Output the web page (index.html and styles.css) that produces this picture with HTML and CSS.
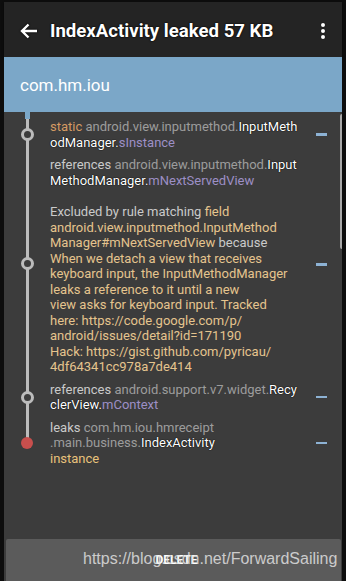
FILE: index.html
```html
<!DOCTYPE html>
<html lang="en">
<head>
    <meta charset="UTF-8">
    <meta name="viewport" content="width=device-width, initial-scale=1.0">
    <title>IndexActivity leaked 57 KB</title>
    <link rel="stylesheet" href="styles.css">
</head>
<body>
    <div class="phone">
        <div class="toolbar">
            <svg class="back" width="18" height="16" viewBox="0 0 18 16">
                <path d="M17 8H2.5M8.5 1.5L2 8l6.5 6.5" fill="none" stroke="#fff" stroke-width="2.4"/>
            </svg>
            <h1 class="title">IndexActivity leaked 57 KB</h1>
            <div class="menu">
                <span></span><span></span><span></span>
            </div>
        </div>

        <div class="app-header">com.hm.iou</div>

        <div class="trace">
            <div class="row">
                <div class="node"></div>
                <div class="text">
                    <span class="kw">static</span> <span class="pkg">android.view.inputmethod.</span><span class="cls">InputMeth<br>odManager.</span><span class="field">sInstance</span>
                </div>
                <div class="minus"></div>
            </div>

            <div class="row">
                <div></div>
                <div class="text">
                    <span class="ref">references</span> <span class="pkg">android.view.inputmethod.</span><span class="cls">Input<br>MethodManager.</span><span class="field">mNextServedView</span>
                </div>
                <div></div>
            </div>

            <div class="row row-long">
                <div class="node"></div>
                <div class="text">
                    <span class="ref">Excluded by rule matching</span> <span class="rule">field<br>android.view.inputmethod.InputMethod<br>Manager#mNextServedView</span> <span class="ref">because</span><br>
                    <span class="rule">When we detach a view that receives<br>keyboard input, the InputMethodManager<br>leaks a reference to it until a new<br>view asks for keyboard input. Tracked<br>here: https://code.google.com/p/<br>android/issues/detail?id=171190<br>Hack: https://gist.github.com/pyricau/<br>4df64341cc978a7de414</span>
                </div>
                <div class="minus"></div>
            </div>

            <div class="row">
                <div class="node"></div>
                <div class="text">
                    <span class="ref">references</span> <span class="pkg">android.support.v7.widget.</span><span class="cls">Recy<br>clerView.</span><span class="field">mContext</span>
                </div>
                <div class="minus"></div>
            </div>

            <div class="row">
                <div class="node leak"></div>
                <div class="text">
                    <span class="ref">leaks</span> <span class="pkg">com.hm.iou.hmreceipt<br>.main.business.</span><span class="cls">IndexActivity</span><br>
                    <span class="inst">instance</span>
                </div>
                <div class="minus"></div>
            </div>

            <div class="scroll-edge"></div>
        </div>

        <div class="delete-bar">
            <span class="delete">DELETE</span>
            <span class="watermark">https://blog.csdn.net/ForwardSailing</span>
        </div>
    </div>
</body>
</html>
```

FILE: styles.css
```css
body {
    margin: 0;
    background: #0d0d0d;
    font-family: Roboto, "Noto Sans", sans-serif;
    width: 346px;
    height: 581px;
    overflow: hidden;
}

.phone {
    margin: 2px 0 0 4px;
    width: 338px;
    height: 579px;
    display: flex;
    flex-direction: column;
    background: #3c3c3c;
}

.toolbar {
    height: 55px;
    flex-shrink: 0;
    background: #242424;
    display: flex;
    align-items: center;
    padding: 2px 0 0 16px;
    box-sizing: border-box;
    box-shadow: 0 1px 2px rgba(0, 0, 0, 0.6);
}

.back {
    flex-shrink: 0;
    filter: drop-shadow(0 0 1px #000);
}

.title {
    margin: 0 0 0 12px;
    flex: 1;
    color: #fff;
    font-size: 18.6px;
    font-weight: bold;
    text-shadow: 0 0 2px #000, 0 0 1px #000;
}

.menu {
    width: 30px;
    display: flex;
    flex-direction: column;
    align-items: center;
    gap: 2px;
    margin-right: 4px;
}

.menu span {
    width: 4px;
    height: 4px;
    border-radius: 50%;
    background: #fff;
    box-shadow: 0 0 1px #000;
}

.app-header {
    height: 55px;
    flex-shrink: 0;
    background: #7ba7c8;
    color: #fff;
    font-size: 17px;
    display: flex;
    align-items: center;
    padding-left: 16px;
    box-sizing: border-box;
}

.trace {
    flex: 1;
    position: relative;
    padding-top: 7px;
    background:
        linear-gradient(#7ba7c8, #7ba7c8) no-repeat 20.5px 0 / 5px 7px,
        linear-gradient(#bcbcbc, #bcbcbc) no-repeat 21.5px 0 / 3px 332px;
}

.row {
    display: grid;
    grid-template-columns: 46px 1fr 30px;
    align-items: center;
    margin-bottom: 7px;
}

.row:nth-child(2) {
    margin-bottom: 16px;
}

.text {
    font-size: 13px;
    line-height: 15.5px;
    white-space: nowrap;
}

.node {
    width: 7px;
    height: 7px;
    border: 3px solid #bcbcbc;
    border-radius: 50%;
    background: #3c3c3c;
    justify-self: center;
}

.node.leak {
    width: 12px;
    height: 12px;
    border: none;
    background: #c84f4d;
}

.minus {
    width: 11px;
    height: 2.5px;
    background: #8db2d4;
    margin-left: 4px;
}

.row-long {
    align-items: start;
}

.row-long .node {
    margin-top: 53px;
}

.row-long .minus {
    margin-top: 59px;
}

.kw {
    color: #d49a63;
}

.pkg {
    color: #9c9c9c;
}

.ref {
    color: #cacaca;
}

.cls {
    color: #fff;
    text-shadow: 0 0 1px #000, 0 0 1px #000;
}

.field {
    color: #9c8fc6;
}

.rule {
    color: #e5c48e;
}

.inst {
    color: #e8c27b;
}

.scroll-edge {
    position: absolute;
    right: 0;
    top: 2px;
    width: 2px;
    height: 135px;
    border-radius: 2px 0 0 2px;
    background: #a8a8a8;
}

.delete-bar {
    position: relative;
    height: 42px;
    flex-shrink: 0;
    margin: 0 1px 0 2px;
    background: #5b5b5b;
    border-radius: 2px 2px 0 0;
    display: flex;
    align-items: center;
    justify-content: center;
}

.delete {
    color: #fff;
    font-size: 12px;
    font-weight: bold;
    margin-left: 6px;
}

.watermark {
    position: absolute;
    left: 77px;
    top: 11px;
    font-family: "Liberation Sans", Arial, sans-serif;
    font-size: 16px;
    color: rgba(225, 225, 225, 0.85);
}
```
